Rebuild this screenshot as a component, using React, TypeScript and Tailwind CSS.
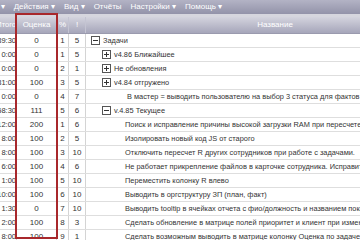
type Row = {
  total: string;
  score: string;
  pct: string;
  prio: string;
  level: number;
  toggle?: "open" | "closed";
  name: string;
};

const rows: Row[] = [
  { total: "89:30", score: "0", pct: "1", prio: "5", level: 0, toggle: "open", name: "Задачи" },
  { total: "0:00", score: "0", pct: "1", prio: "5", level: 1, toggle: "closed", name: "v4.86 Ближайшее" },
  { total: "0:00", score: "0", pct: "2", prio: "1", level: 1, toggle: "closed", name: "Не обновления" },
  { total: "31:00", score: "100", pct: "3", prio: "5", level: 1, toggle: "closed", name: "v4.84 отгружено" },
  { total: "0:00", score: "0", pct: "4", prio: "7", level: 1, name: "В мастер = выводить пользователю на выбор 3 статуса для фактов задач по проекту" },
  { total: "58:30", score: "111", pct: "5", prio: "6", level: 1, toggle: "open", name: "v.4.85 Текущее" },
  { total: "12:00", score: "200", pct: "1", prio: "6", level: 2, name: "Поиск и исправление причины высокой загрузки RAM при пересчете R" },
  { total: "8:00", score: "100", pct: "2", prio: "5", level: 2, name: "Изолировать новый код JS от старого" },
  { total: "8:00", score: "100", pct: "3", prio: "10", level: 2, name: "Отключить пересчет R других сотрудников при работе с задачами." },
  { total: "6:00", score: "100", pct: "4", prio: "6", level: 2, name: "Не работает прикрепление файлов в карточке сотрудника. Исправить" },
  { total: "1:00", score: "100", pct: "5", prio: "10", level: 2, name: "Переместить колонку R влево" },
  { total: "10:00", score: "100", pct: "6", prio: "10", level: 2, name: "Выводить в оргструктуру ЗП (план, факт)" },
  { total: "1:30", score: "0", pct: "7", prio: "10", level: 2, name: "Выводить tooltip в ячейках отчета с фио/должность и названием показателя" },
  { total: "2:00", score: "100", pct: "8", prio: "3", level: 2, name: "Сделать обновление в матрице полей приоритет и клиент при изменении" },
  { total: "8:00", score: "100", pct: "9", prio: "1", level: 2, name: "Сделать возможным выводить в матрице колонку Оценка по задаче (план)" },
];

function Toggle({ open }: { open: boolean }) {
  return (
    <svg width="9" height="9" viewBox="0 0 9 9" className="shrink-0">
      <rect x="0.5" y="0.5" width="8" height="8" fill="#fff" stroke="#555" />
      <path d="M2 4.5h5" stroke="#333" />
      {!open && <path d="M4.5 2v5" stroke="#333" />}
    </svg>
  );
}

export default function App() {
  return (
    <div className="relative w-[360px] h-[240px] overflow-hidden bg-white font-['Liberation_Sans',Arial,sans-serif] text-[8px] text-[#333]">
      {/* Menu bar */}
      <div className="h-[14px] flex items-center bg-gradient-to-b from-[#b3b3c5] to-[#9393a9] text-white whitespace-nowrap">
        <div className="flex items-center gap-[9px] -ml-[27px]">
          <span>Файлы ▾</span>
          <span>Действия ▾</span>
          <span>Вид ▾</span>
          <span>Отчёты</span>
          <span>Настройки ▾</span>
          <span>Помощь ▾</span>
        </div>
      </div>
      <div className="h-[3px] bg-[#d6d6de]" />

      <div className="-ml-[6px] w-[470px]">
        {/* Header */}
        <div className="flex h-[17px] bg-gradient-to-b from-[#d4d4de] to-[#a6a6ba] text-white border-b border-[#9a9aae]">
          <div className="w-[23px] border-r border-[#c4c4d2] flex items-center justify-end text-[7.5px]">Итого</div>
          <div className="w-[40px] border-r border-[#c4c4d2] flex items-center justify-center">Оценка</div>
          <div className="w-[12px] border-r border-[#c4c4d2] flex items-center justify-center">%</div>
          <div className="w-[17px] border-r border-[#c4c4d2] flex items-center justify-center">!</div>
          <div className="w-[378px] flex items-center justify-center">Название</div>
        </div>

        {/* Rows */}
        {rows.map((r, i) => (
          <div key={i} className="flex h-[14px] border-b border-[#dedede] whitespace-nowrap">
            <div className="w-[23px] border-r border-[#d4d4d4] flex items-center justify-end text-[7.5px]">{r.total}</div>
            <div className="w-[40px] border-r border-[#d4d4d4] flex items-center justify-center">{r.score}</div>
            <div className="w-[12px] border-r border-[#d4d4d4] flex items-center justify-center">{r.pct}</div>
            <div className="w-[17px] border-r border-[#d4d4d4] flex items-center justify-center">{r.prio}</div>
            <div className="w-[378px] flex items-center overflow-hidden text-[7.4px]">
              {r.toggle ? (
                <div className={`flex items-center gap-[3px] ${r.level === 0 ? "pl-[5px]" : "pl-[16px]"}`}>
                  <Toggle open={r.toggle === "open"} />
                  <span>{r.name}</span>
                </div>
              ) : (
                <span className={r.level === 1 ? "pl-[41px]" : "pl-[39px]"}>{r.name}</span>
              )}
            </div>
          </div>
        ))}
      </div>

      {/* Red highlight around the Оценка column */}
      <div className="absolute left-[15px] top-[13px] w-[43px] h-[226px] border-2 border-[#a8282c]" />
    </div>
  );
}
